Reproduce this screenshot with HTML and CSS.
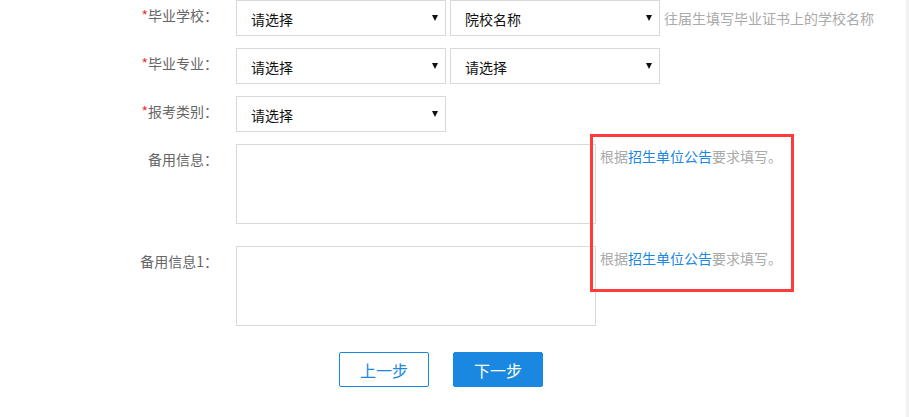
FILE: index.html
```html
<!DOCTYPE html>
<html lang="zh-CN">
<head>
<meta charset="utf-8">
<title>报名信息</title>
<link rel="stylesheet" href="styles.css">
</head>
<body>
<div class="page">
  <form class="form">
    <div class="row">
      <label class="label"><span class="req">*</span>毕业学校<span class="colon">：</span></label>
      <div class="fields">
        <div class="select"><span class="val">请选择</span><span class="caret"></span></div>
        <div class="select"><span class="val">院校名称</span><span class="caret"></span></div>
        <span class="hint">往届生填写毕业证书上的学校名称</span>
      </div>
    </div>
    <div class="row">
      <label class="label"><span class="req">*</span>毕业专业<span class="colon">：</span></label>
      <div class="fields">
        <div class="select"><span class="val">请选择</span><span class="caret"></span></div>
        <div class="select"><span class="val">请选择</span><span class="caret"></span></div>
      </div>
    </div>
    <div class="row">
      <label class="label"><span class="req">*</span>报考类别<span class="colon">：</span></label>
      <div class="fields">
        <div class="select"><span class="val">请选择</span><span class="caret"></span></div>
      </div>
    </div>
    <div class="row row-area">
      <label class="label">备用信息<span class="colon">：</span></label>
      <div class="fields">
        <textarea class="area"></textarea>
        <span class="tip">根据<span class="link">招生单位公告</span>要求填写。</span>
      </div>
    </div>
    <div class="row row-area2">
      <label class="label">备用信息1<span class="colon">：</span></label>
      <div class="fields">
        <textarea class="area"></textarea>
        <span class="tip">根据<span class="link">招生单位公告</span>要求填写。</span>
      </div>
    </div>
    <div class="actions">
      <button type="button" class="btn btn-ghost">上一步</button>
      <button type="button" class="btn btn-primary">下一步</button>
    </div>
    <div class="mark"></div>
  </form>
</div>
</body>
</html>
```
FILE: styles.css
```css
html {
  background: #f1f1f1;
}
body {
  margin: 0;
  font-family: "Noto Sans CJK SC", "Noto Sans", sans-serif;
  font-size: 14px;
  color: #333;
}
.page {
  width: 906px;
  height: 417px;
  background: #fff;
  overflow: hidden;
}
.form {
  position: relative;
}
.row {
  display: flex;
  align-items: flex-start;
  margin-bottom: 12px;
}
.row-area {
  margin-bottom: 22px;
}
.row-area2 {
  margin-bottom: 26px;
}
.label {
  width: 218px;
  margin-right: 18px;
  text-align: right;
  line-height: 30px;
  color: #666;
  flex: none;
}
.colon {
  font-family: "Noto Sans CJK JP", "Noto Sans CJK SC", sans-serif;
}
.req {
  color: #e33;
}
.fields {
  display: flex;
  align-items: flex-start;
  gap: 4px;
}
.select {
  box-sizing: border-box;
  width: 210px;
  height: 36px;
  border: 1px solid #d9d9d9;
  background: #fff;
  display: flex;
  align-items: center;
  justify-content: space-between;
  padding: 0 7px 0 14px;
}
.val {
  color: #111;
  line-height: 34px;
  padding-top: 2px;
}
.caret {
  width: 0;
  height: 0;
  border-left: 3px solid transparent;
  border-right: 3px solid transparent;
  border-top: 6px solid #111;
  margin-top: -1px;
}
.hint {
  color: #aaa;
  line-height: 36px;
}
.area {
  display: block;
  box-sizing: border-box;
  width: 360px;
  height: 80px;
  margin: 0;
  border: 1px solid #d9d9d9;
  resize: none;
  font: inherit;
}
.tip {
  color: #aaa;
  line-height: 25px;
}
.link {
  color: #1a88e0;
}
.actions {
  display: flex;
  gap: 24px;
  padding-left: 339px;
}
.btn {
  box-sizing: border-box;
  width: 90px;
  height: 35px;
  border-radius: 2px;
  font-family: inherit;
  font-size: 16px;
  cursor: pointer;
  padding: 0;
}
.btn-ghost {
  background: #fff;
  border: 1px solid #1a88e0;
  color: #1a88e0;
}
.btn-primary {
  background: #1a88e0;
  border: 1px solid #1a88e0;
  color: #fff;
}
.mark {
  position: absolute;
  left: 590px;
  top: 134px;
  width: 204px;
  height: 158px;
  box-sizing: border-box;
  border: 3px solid #ff3b3b;
  pointer-events: none;
}
```
